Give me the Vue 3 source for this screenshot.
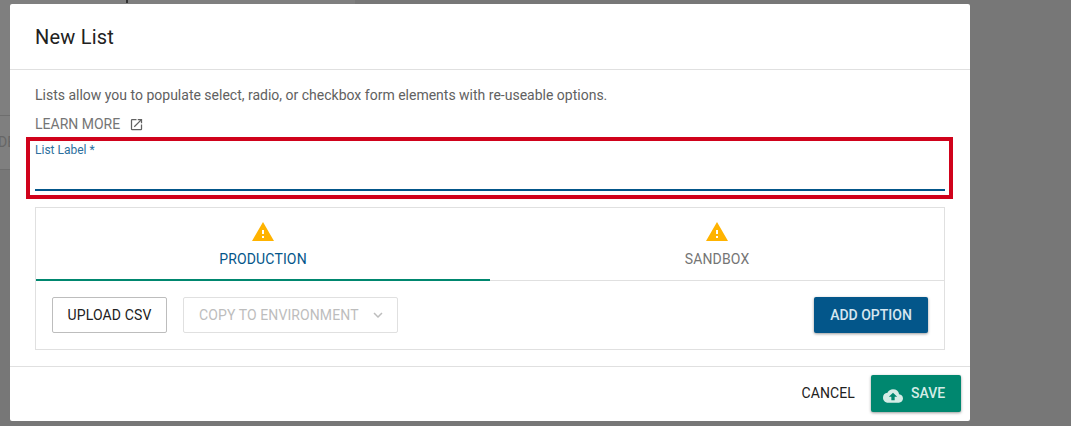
<script setup>
const tabs = [
  { label: 'PRODUCTION', active: true },
  { label: 'SANDBOX', active: false },
]
</script>

<template>
  <div class="page">
    <div class="backdrop-top"><i class="backdrop-tick"></i></div>
    <div class="backdrop-side"></div>
    <div class="backdrop-tab">DE</div>
    <section class="dialog">
      <header class="dialog__head">New List</header>
      <div class="dialog__body">
        <p class="intro">Lists allow you to populate select, radio, or checkbox form elements with re-useable options.</p>
        <a class="learn">
          LEARN MORE
          <svg viewBox="0 0 24 24" width="15" height="15"><path d="M19 19H5V5h7V3H5a2 2 0 0 0-2 2v14a2 2 0 0 0 2 2h14a2 2 0 0 0 2-2v-7h-2v7zM14 3v2h3.59l-9.83 9.83 1.41 1.41L19 6.41V10h2V3h-7z" fill="#616161"/></svg>
        </a>
        <div class="highlight">
          <label class="field">
            <span class="field__label">List Label *</span>
            <input class="field__input" type="text">
          </label>
        </div>
        <div class="panel">
          <div class="tabs">
            <div v-for="tab in tabs" :key="tab.label" class="tab" :class="{ 'tab--active': tab.active }">
              <svg viewBox="0 0 22 19" width="22" height="19"><path d="M0 19h22L11 0 0 19zm12-3h-2v-2h2v2zm0-4h-2V8h2v4z" fill="#ffb300"/></svg>
              <span>{{ tab.label }}</span>
            </div>
          </div>
          <div class="actions">
            <button class="btn btn--outline">UPLOAD CSV</button>
            <button class="btn btn--disabled">
              COPY TO ENVIRONMENT
              <svg viewBox="0 0 24 24" width="18" height="18"><path d="M7.41 8.59 12 13.17l4.59-4.58L18 10l-6 6-6-6z" fill="#bdbdbd"/></svg>
            </button>
            <button class="btn btn--primary">ADD OPTION</button>
          </div>
        </div>
      </div>
      <footer class="dialog__foot">
        <button class="btn btn--text">CANCEL</button>
        <button class="btn btn--save">
          <svg viewBox="0 0 24 24" width="20" height="20"><path d="M19.35 10.04A7.49 7.49 0 0 0 12 4C9.11 4 6.6 5.64 5.35 8.04A5.994 5.994 0 0 0 0 14c0 3.31 2.69 6 6 6h13c2.76 0 5-2.24 5-5 0-2.64-2.05-4.78-4.65-4.96zM14 13v4h-4v-4H7l5-5 5 5h-3z" fill="#d5ece6"/></svg>
          SAVE
        </button>
      </footer>
    </section>
  </div>
</template>

<style scoped>
.page {
  position: relative;
  width: 1071px;
  height: 426px;
  overflow: hidden;
  padding: 4px 0 0 10px;
  box-sizing: border-box;
  background: #777;
  font-family: Roboto, "Liberation Sans", sans-serif;
}

.backdrop-top {
  position: absolute;
  left: 0;
  top: 0;
  width: 355px;
  height: 4px;
  background: #7f7f7f;
}

.backdrop-tick {
  position: absolute;
  left: 126px;
  top: 0;
  width: 2px;
  height: 3px;
  background: #333;
}

.backdrop-side {
  position: absolute;
  left: 0;
  top: 0;
  width: 10px;
  height: 115px;
  background: #7f7f7f;
}

.backdrop-tab {
  position: absolute;
  left: 0;
  top: 115px;
  width: 10px;
  height: 53px;
  overflow: hidden;
  line-height: 53px;
  font-size: 14px;
  color: #666;
  text-indent: -2px;
  background: #7f7f7f;
  border-top: 1px solid #6e6e6e;
  border-bottom: 1px solid #6e6e6e;
}

.dialog {
  position: relative;
  display: flex;
  flex-direction: column;
  width: 960px;
  height: 417px;
  background: #fff;
  border-radius: 2px;
}

.dialog__head {
  height: 66px;
  flex: none;
  box-sizing: border-box;
  padding: 0 25px;
  display: flex;
  align-items: center;
  font-size: 20px;
  font-weight: 400;
  letter-spacing: .2px;
  color: #212121;
  border-bottom: 1px solid #e0e0e0;
}

.dialog__body {
  flex: 1;
  padding: 0 25px;
}

.intro {
  margin: 15px 0 0;
  font-size: 14px;
  line-height: 20px;
  color: #616161;
}

.learn {
  display: flex;
  align-items: center;
  gap: 9px;
  margin-top: 10px;
  height: 18px;
  font-size: 14px;
  color: #757575;
}

.highlight {
  margin: 4px -8px 0 -9px;
  height: 62px;
  box-sizing: border-box;
  border: 4px solid #d0021b;
  padding: 1px 4px 4px 5px;
  display: flex;
}

.field {
  flex: 1;
  display: flex;
  flex-direction: column;
}

.field__label {
  font-size: 12px;
  line-height: 16px;
  color: #2d6f9e;
}

.field__input {
  flex: 1;
  border: 0;
  border-bottom: 2px solid #03568a;
  outline: 0;
  padding: 0;
}

.panel {
  margin-top: 8px;
  border: 1px solid #e0e0e0;
  height: 143px;
  box-sizing: border-box;
}

.tabs {
  display: flex;
  height: 73px;
  box-sizing: border-box;
  border-bottom: 1px solid #e0e0e0;
}

.tab {
  flex: 1;
  display: flex;
  flex-direction: column;
  align-items: center;
  padding-top: 14px;
  gap: 10px;
  font-size: 14px;
  font-weight: 400;
  letter-spacing: .15px;
  color: #757575;
  margin-bottom: -1px;
}

.tab--active {
  color: #03568a;
  border-bottom: 2px solid #00876f;
}

.actions {
  display: flex;
  align-items: center;
  gap: 16px;
  padding: 16px;
}

.btn {
  font-family: inherit;
  font-size: 14px;
  font-weight: 400;
  border-radius: 2px;
  height: 36px;
  box-sizing: border-box;
  display: inline-flex;
  align-items: center;
  justify-content: center;
  background: #fff;
  padding: 0;
}

.btn--outline {
  width: 115px;
  border: 1px solid #bdbdbd;
  color: #212121;
  letter-spacing: .15px;
}

.btn--disabled {
  width: 215px;
  justify-content: flex-start;
  padding-left: 15px;
  gap: 10px;
  border: 1px solid #e0e0e0;
  color: #bdbdbd;
  letter-spacing: .1px;
}

.btn--primary {
  width: 114px;
  margin-left: auto;
  border: 0;
  background: #03568a;
  color: #d6e6f0;
  font-weight: 500;
  box-shadow: 0 1px 3px rgba(0, 0, 0, .4);
}

.dialog__foot {
  flex: none;
  height: 55px;
  box-sizing: border-box;
  border-top: 1px solid #e0e0e0;
  display: flex;
  align-items: center;
  justify-content: flex-end;
  gap: 16px;
  padding: 0 9px 1px 0;
}

.btn--text {
  border: 0;
  padding-bottom: 2px;
  color: #212121;
  letter-spacing: .1px;
}

.btn--save {
  width: 90px;
  height: 37px;
  justify-content: flex-start;
  padding: 0 0 2px 12px;
  gap: 8px;
  border: 0;
  background: #00876f;
  color: #d5ece6;
  font-weight: 500;
  box-shadow: 0 1px 3px rgba(0, 0, 0, .4);
}

.btn--save svg {
  margin-top: 7px;
}
</style>
